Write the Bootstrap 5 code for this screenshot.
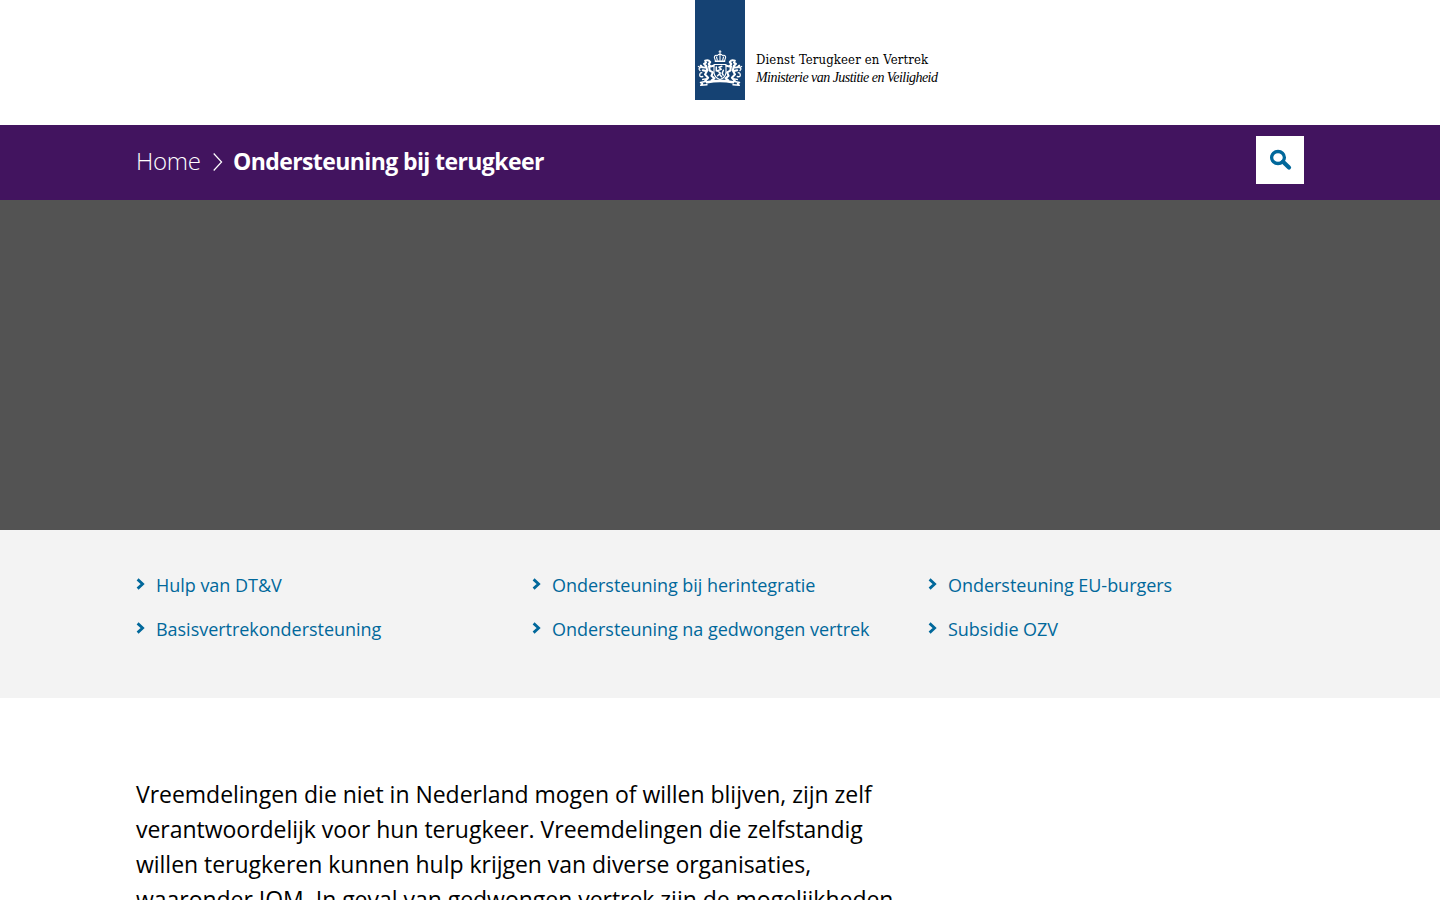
<!DOCTYPE html>
<html lang="nl">
<head>
<meta charset="utf-8">
<meta name="viewport" content="width=device-width, initial-scale=1">
<title>Ondersteuning bij terugkeer | Dienst Terugkeer en Vertrek</title>
<link href="https://cdn.jsdelivr.net/npm/bootstrap@5.3.0/dist/css/bootstrap.min.css" rel="stylesheet">
<style>
body{font-family:"Open Sans","Noto Sans",sans-serif;color:#000;height:100vh;overflow:hidden}
.page-width{width:1168px;margin-inline:auto}
.site-header{height:125px;padding-left:695px}
.ribbon{width:50px;height:100px;background:#154273}
.wordmark{padding:51px 0 0 11px;line-height:18px;white-space:nowrap}
.service{font:13px/18px "DejaVu Serif Condensed","DejaVu Serif",serif;letter-spacing:.13px}
.ministry{font:italic 14px/18px "Liberation Serif",serif;letter-spacing:-.54px}
.crumb-bar{height:75px;background:#42145f}
.crumbs{font-size:24px;line-height:36px;padding-top:18px;white-space:nowrap}
.crumbs a{font-weight:300;letter-spacing:-.25px;width:77px}
.crumbs strong{font-size:23px;font-weight:700;letter-spacing:-.6px;margin-left:10px}
.search-btn{width:48px;height:48px;margin-top:11px;border-radius:0;background:#fff}
.hero{height:330px;background:#535353}
.topics{height:168px;background:#f3f3f3;padding-top:33px}
.topics .row{--bs-gutter-x:0}
.topics .col-4{width:396px;height:44px}
.topics a{color:#01689b;font-size:18px;line-height:44px;letter-spacing:-.03px;white-space:nowrap}
.topics svg{margin:15px 11px 0 0}
.intro{font-size:23px;line-height:35px;letter-spacing:-.025px;padding-top:79px;white-space:nowrap}
</style>
</head>
<body>
<header class="site-header d-flex">
  <div class="ribbon flex-shrink-0">
    <svg width="50" height="100" viewBox="0 0 50 100" fill="none" stroke="#fff" stroke-linecap="round" stroke-linejoin="round" aria-hidden="true">
      <!-- crown -->
      <path d="M25 50.5v3M24 51.8h2" stroke-width="1"/>
      <path d="M20.5 61.2 19.3 57.2Q20 54.6 22.2 55.6 25 52.8 27.8 55.6 30 54.6 30.7 57.2L29.5 61.2ZM22.3 60l-.8-3M25 60v-5M27.7 60l.8-3" stroke-width="1.1"/>
      <path d="M20.4 61.3h9.2" stroke-width="1.5"/>
      <!-- shield with lion -->
      <path d="M19 64.5h12v8.3q-1 5.2-6 6.7-5-1.5-6-6.7Z" stroke-width="1.1"/>
      <path d="M26.8 66.2l-2.8 1 2.2 2.2-3.8 1.4 3 2.2-2.8 2.8M21.3 67v4M28.4 70.2l-1.2 3 1 2M25 74.8l1.6 2" stroke-width="1.5"/>
      <!-- supporters -->
      <g id="supporter">
        <path d="M10.2 60.8q3.2-1.6 5 1.3l-1.5 1.9 1.8 2.5 3-.8M11 62.6l-2 1.2 2.2 2.2 1 4.4-2.2 4 3.1 3.4-2.8 3M14 66.2l.7 4.4 3.2 1.8-1.5 3.4 3 2.6-2.7 2M10.8 67.5l-3.6-.2-1.4-1.6M11 71l-3.2-.8" stroke-width="2.1"/>
        <path d="M3.4 66.5l2.3 1.3M7.8 76.5q-3.6 1-3-2 .5-2.4 2-1.7M5 70.5q-2-1.7.2-3M7.6 79.5l3.2-.6" stroke-width="1.3"/>
      </g>
      <use href="#supporter" transform="matrix(-1 0 0 1 50 0)"/>
      <!-- motto ribbon -->
      <path d="M12 82.3q13-3 26 0" stroke-width="2.7"/>
      <path d="M11.5 81.3 5.5 82.5l2 1.2-1.8 1.6 6.3-.5M38.5 81.3l6 1.2-2 1.2 1.8 1.6-6.3-.5" stroke-width="1.5"/>
    </svg>
  </div>
  <div class="wordmark">
    <div class="service">Dienst Terugkeer en Vertrek</div>
    <div class="ministry">Ministerie van Justitie en Veiligheid</div>
  </div>
</header>
<div class="crumb-bar">
  <div class="page-width d-flex justify-content-between">
    <nav class="crumbs d-flex" aria-label="Kruimelpad">
      <a href="#" class="text-white text-decoration-none">Home</a>
      <svg width="10" height="36" viewBox="0 0 10 36" fill="none" stroke="#fff" stroke-width="1.2" aria-hidden="true"><path d="M.7 10.5 8.6 19 .7 27.5"/></svg>
      <strong class="text-white">Ondersteuning bij terugkeer</strong>
    </nav>
    <button class="search-btn btn border-0 p-0 d-block" aria-label="Zoeken">
      <svg class="d-block" width="48" height="48" viewBox="0 0 48 48" fill="none" stroke="#01689b" aria-hidden="true"><ellipse cx="22" cy="21.5" rx="6.4" ry="6" stroke-width="3.3"/><path d="M27 25.8l6 5.8" stroke-width="4.2" stroke-linecap="round"/></svg>
    </button>
  </div>
</div>
<div class="hero"></div>
<nav class="topics" aria-label="Onderwerpen">
  <svg class="d-none"><symbol id="chev" viewBox="0 0 9 12"><path d="M1.6 1.4 6.6 6 1.6 10.6" fill="none" stroke="#01689b" stroke-width="2.8"/></symbol></svg>
  <div class="page-width">
    <div class="row flex-nowrap">
      <div class="col-4"><a href="#" class="d-flex text-decoration-none"><svg width="9" height="12"><use href="#chev"/></svg><span>Hulp van DT&amp;V</span></a></div>
      <div class="col-4"><a href="#" class="d-flex text-decoration-none"><svg width="9" height="12"><use href="#chev"/></svg><span>Ondersteuning bij herintegratie</span></a></div>
      <div class="col-4"><a href="#" class="d-flex text-decoration-none"><svg width="9" height="12"><use href="#chev"/></svg><span>Ondersteuning EU-burgers</span></a></div>
    </div>
    <div class="row flex-nowrap">
      <div class="col-4"><a href="#" class="d-flex text-decoration-none"><svg width="9" height="12"><use href="#chev"/></svg><span>Basisvertrekondersteuning</span></a></div>
      <div class="col-4"><a href="#" class="d-flex text-decoration-none"><svg width="9" height="12"><use href="#chev"/></svg><span>Ondersteuning na gedwongen vertrek</span></a></div>
      <div class="col-4"><a href="#" class="d-flex text-decoration-none"><svg width="9" height="12"><use href="#chev"/></svg><span>Subsidie OZV</span></a></div>
    </div>
  </div>
</nav>
<main class="page-width">
  <p class="intro mb-0">Vreemdelingen die niet in Nederland mogen of willen blijven, zijn zelf<br>verantwoordelijk voor hun terugkeer. Vreemdelingen die zelfstandig<br>willen terugkeren kunnen hulp krijgen van diverse organisaties,<br>waaronder IOM. In geval van gedwongen vertrek zijn de mogelijkheden</p>
</main>
<script src="https://cdn.jsdelivr.net/npm/bootstrap@5.3.0/dist/js/bootstrap.bundle.min.js"></script>
</body>
</html>
